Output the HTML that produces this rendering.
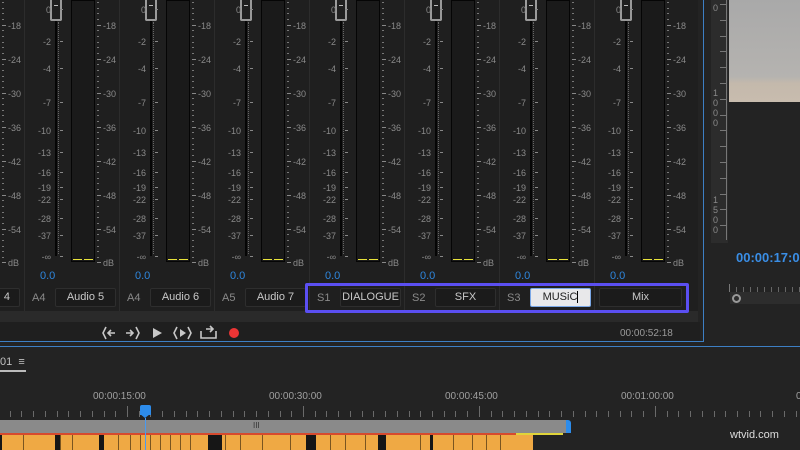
<!DOCTYPE html>
<html><head><meta charset="utf-8"><style>
*{margin:0;padding:0;box-sizing:border-box}
html,body{width:800px;height:450px;overflow:hidden}
body{background:#232323;font-family:"Liberation Sans",sans-serif;position:relative;color:#8c8c8c}
.a{position:absolute}
.t{position:absolute;font-size:9px;color:#8a8a8a;white-space:nowrap;line-height:10px}
.box{position:absolute;height:19px;background:#1b1b1b;border:1px solid #2e2e2e;border-radius:2px;color:#c8c8c8;font-size:11px;text-align:center;line-height:17px;overflow:hidden}
</style></head><body>
<div class="a" style="left:0;top:0;width:698px;height:311px;background:#1f1f1f"></div>
<div id="mx"></div>
<div class="a" style="left:0;top:311px;width:698px;height:11px;background:#2a2a2a"></div>
<div class="a" style="left:0;top:322px;width:700px;height:20px;background:#1f1f1f"></div>
<svg class="a" style="left:100px;top:323px" width="145" height="20" viewBox="0 0 145 20">
<g fill="none" stroke="#c8c8c8" stroke-width="1.6">
<path d="M6 4 L3 10 L6 16"/><path d="M15 10 H8 M11 7 L8 10 L11 13"/>
<path d="M26 10 H33 M30 7 L33 10 L30 13"/><path d="M36 4 L39 10 L36 16"/>
<path d="M77 4 L74 10 L77 16"/><path d="M88 4 L91 10 L88 16"/>
<path d="M101 8 V15 H116 V8 M106 6 H113 M110 3 L113 6 L110 9"/>
</g>
<path d="M53 5 L62 10 L53 15 Z" fill="#c8c8c8"/>
<path d="M80 6 L86 10 L80 14 Z" fill="#c8c8c8"/>
<circle cx="134" cy="10" r="5" fill="#ec3535"/>
</svg>
<div class="t" style="left:620px;top:329px;font-size:10px;color:#9a9a9a">00:00:52:18</div>
<div class="a" style="left:0;top:341px;width:704px;height:1px;background:#3d7fc4"></div>
<div class="a" style="left:703px;top:0;width:1px;height:342px;background:#3d7fc4"></div>
<div class="a" style="left:0;top:346px;width:800px;height:1px;background:#3d7fc4"></div>
<div class="a" style="left:0;top:347px;width:800px;height:103px;background:#232323"></div>
<div class="a" style="left:711px;top:0;width:17px;height:243px;background:#2c2c2c"></div>
<div class="a" style="left:726px;top:0;width:1px;height:240px;background:#777"></div>
<div id="rr"></div>
<div class="t" style="left:713px;top:88px;line-height:10px">1<br>0<br>0<br>0</div>
<div class="t" style="left:713px;top:195px;line-height:10px">1<br>5<br>0<br>0</div>
<div class="t" style="left:713px;top:3px">0</div>
<div class="a" style="left:729px;top:0;width:71px;height:102px;background:linear-gradient(#a9a9a9,#b5b3b0 75%,#c4b9ac 82%,#c8bcae)"></div>
<div class="t" style="left:736px;top:251px;font-size:13px;font-weight:bold;color:#3a8ee6;line-height:14px">00:00:17:0</div>
<div class="a" style="left:730px;top:292px;width:70px;height:12px;background:#2d2d2d"></div>
<div class="a" style="left:732px;top:294px;width:9px;height:9px;border:2px solid #9a9a9a;border-radius:50%"></div>
<div id="rt"></div>
<div class="a" style="left:305px;top:283px;width:384px;height:30px;border:3px solid #5b4ff2;border-radius:2px"></div>
<div class="t" style="left:0;top:357px;font-size:11px;color:#c0c0c0">01 &nbsp;≡</div>
<div class="a" style="left:0;top:370px;width:26px;height:2px;background:#bbb"></div>
<div id="tl"></div>
<div class="a" style="left:0;top:420px;width:566px;height:13px;background:#8a8a8a"></div>
<div class="t" style="left:253px;top:421px;font-size:8px;color:#333">III</div>
<div class="a" style="left:566px;top:420px;width:5px;height:13px;background:#2d8ceb;border-radius:0 3px 0 0"></div>
<div class="a" style="left:0;top:433px;width:516px;height:2px;background:#d64a2e"></div>
<div class="a" style="left:516px;top:433px;width:47px;height:2px;background:#e0d43a"></div>
<div id="clips"></div>
<div class="a" style="left:140px;top:405px;width:11px;height:10px;background:#2d8ceb;border-radius:2px 2px 0 0"></div>
<div class="a" style="left:140px;top:414px;width:0;height:0;border-left:5.5px solid transparent;border-right:5.5px solid transparent;border-top:4px solid #2d8ceb"></div>
<div class="a" style="left:145px;top:418px;width:1px;height:32px;background:#4a9af0"></div>
<div class="t" style="left:730px;top:430px;font-size:11px;color:#ddd">wtvid.com</div>
<script>
var h='';
var R=[['-18',21],['-24',55],['-30',89],['-36',123],['-42',157],['-48',191],['-54',225],['dB',258]];
var L=[['0',5],['-2',37],['-4',64],['-7',98],['-10',126],['-13',148],['-16',168],['-19',183],['-22',195],['-28',214],['-37',231],['-∞',252]];
var names=[['A4','Audio 5'],['A4','Audio 6'],['A5','Audio 7'],['S1','DIALOGUE'],['S2','SFX'],['S3','MUSiC']];
for(var k=-1;k<=6;k++){var x=24+95*k;
 if(k>=0)h+='<div class="a" style="left:'+x+'px;top:0;width:1px;height:311px;background:#2c2c2c"></div>';
 h+='<div class="a" style="left:'+(x+31)+'px;top:18px;width:2px;height:238px;background:#050505"></div>';
 h+='<div class="a" style="left:'+(x+34)+'px;top:22px;width:1px;height:232px;border-left:1px dotted #666"></div>';
 h+='<div class="a" style="left:'+(x+26)+'px;top:0;width:12px;height:21px;border:2px solid #9a9a9a;border-top:none;border-radius:0 0 2px 2px;background:#1f1f1f"></div>';
 h+='<div class="a" style="left:'+(x+30)+'px;top:5px;width:4px;height:1px;background:#bbb"></div>';
 h+='<div class="a" style="left:'+(x+47)+'px;top:0;width:24px;height:262px;background:#1a1a1a;border:1px solid #050505"></div>';
 h+='<div class="a" style="left:'+(x+49)+'px;top:259px;width:9px;height:1px;background:#e8e23a"></div><div class="a" style="left:'+(x+60)+'px;top:259px;width:9px;height:1px;background:#e8e23a"></div>';
 for(var y=2;y<258;y+=5.67)h+='<div class="a" style="left:'+(x+73)+'px;top:'+Math.round(y)+'px;width:2px;height:1px;background:#777"></div>';
 R.forEach(function(r){h+='<div class="a" style="left:'+(x+73)+'px;top:'+(r[1]+4)+'px;width:4px;height:1px;background:#888"></div><div class="t" style="left:'+(x+79)+'px;top:'+r[1]+'px">'+r[0]+'</div>'});
 L.forEach(function(r){h+='<div class="t" style="left:'+(x-2)+'px;width:29px;text-align:right;top:'+r[1]+'px">'+r[0]+'</div><div class="a" style="left:'+(x+36)+'px;top:'+(r[1]+4)+'px;width:3px;height:1px;background:#888"></div>'});
 h+='<div class="t" style="left:'+(x+16)+'px;top:270px;font-size:11px;color:#2e86dd;line-height:12px">0.0</div>';
 if(k>=0&&k<6){var n=names[k];h+='<div class="t" style="left:'+(x+8)+'px;top:292px;font-size:11px;line-height:12px">'+n[0]+'</div>';
  var st=k==5?'background:#e8e8ea;color:#222;border-color:#7aa7e6':'';
  h+='<div class="box" style="left:'+(x+31)+'px;top:288px;width:61px;'+st+'">'+n[1]+(k==5?'<span style="display:inline-block;width:1px;height:12px;background:#000;vertical-align:middle"></span>':'')+'</div>';}
}
h+='<div class="box" style="left:-30px;top:288px;width:50px;text-align:right;padding-right:9px">4</div>';
h+='<div class="box" style="left:599px;top:288px;width:83px">Mix</div>';
document.getElementById('mx').innerHTML=h;
var r='';for(var y=4;y<240;y+=15.8)r+='<div class="a" style="left:720px;top:'+Math.round(y)+'px;width:6px;height:1px;background:#777"></div>';
document.getElementById('rr').innerHTML=r;
var rt='<div class="a" style="left:729px;top:284px;width:1px;height:8px;background:#777"></div>';for(var x=736;x<800;x+=7)rt+='<div class="a" style="left:'+x+'px;top:287px;width:1px;height:5px;background:#666"></div>';
document.getElementById('rt').innerHTML=rt;
var t='';[['00:00:15:00',122],['00:00:30:00',298],['00:00:45:00',474],['00:01:00:00',650]].forEach(function(a){t+='<div class="t" style="left:'+(a[1]-29)+'px;top:392px;font-size:10px;color:#a0a0a0">'+a[0]+'</div>'});
t+='<div class="t" style="left:796px;top:392px;font-size:10px;color:#a0a0a0">0</div>';
for(var i=0;i<69;i++){var x=Math.round(-2+i*11.73);var big=(i%15==11);t+='<div class="a" style="left:'+x+'px;top:'+(big?406:411)+'px;width:1px;height:'+(big?11:6)+'px;background:#6a6a6a"></div>'}
document.getElementById('tl').innerHTML=t;
var c='<div class="a" style="left:0;top:435px;width:533px;height:15px;background:#efa944"></div>';
[[0,2],[55,5],[99,5],[208,14],[306,10],[378,8],[430,3]].forEach(function(a){c+='<div class="a" style="left:'+a[0]+'px;top:435px;width:'+a[1]+'px;height:15px;background:#161616"></div>'});
[23,60,72,118,130,140,150,160,170,180,190,225,240,262,290,330,345,365,420,453,472,486,500].forEach(function(x){c+='<div class="a" style="left:'+x+'px;top:435px;width:1px;height:15px;background:#7a5520"></div>'});
document.getElementById('clips').innerHTML=c;
</script>
</body></html>
